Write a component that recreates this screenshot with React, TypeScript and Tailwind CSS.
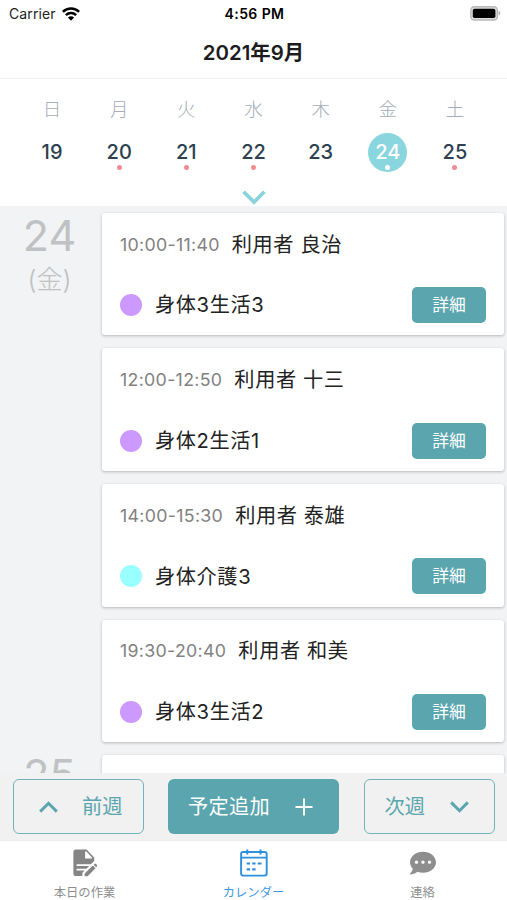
import { FaCommentDots } from "react-icons/fa";

const WEEK = [
  { label: "日", day: 19, marked: false },
  { label: "月", day: 20, marked: true },
  { label: "火", day: 21, marked: true },
  { label: "水", day: 22, marked: true },
  { label: "木", day: 23, marked: false },
  { label: "金", day: 24, marked: true },
  { label: "土", day: 25, marked: true },
];

const SELECTED_DAY = 24;

const VISITS = [
  { time: "10:00-11:40", name: "利用者 良治", service: "身体3生活3", dot: "bg-[#cc99ff]" },
  { time: "12:00-12:50", name: "利用者 十三", service: "身体2生活1", dot: "bg-[#cc99ff]" },
  { time: "14:00-15:30", name: "利用者 泰雄", service: "身体介護3", dot: "bg-[#99ffff]" },
  { time: "19:30-20:40", name: "利用者 和美", service: "身体3生活2", dot: "bg-[#cc99ff]" },
];

function WifiIcon() {
  return (
    <svg width="18" height="14" viewBox="0 0 18 14" fill="none" stroke="#000" strokeWidth="2.5">
      <path d="M0.9 4.9a11.6 11.6 0 0 1 16.2 0" />
      <path d="M3.9 8.1a7.3 7.3 0 0 1 10.2 0" />
      <path d="M9 13.8 5.9 10.6a4.5 4.5 0 0 1 6.2 0z" fill="#000" stroke="none" />
    </svg>
  );
}

function BatteryIcon() {
  return (
    <svg width="31" height="15" viewBox="0 0 31 15">
      <rect x="0.8" y="0.8" width="26.6" height="13.2" rx="3.6" fill="#ddd" stroke="#b8b8b8" strokeWidth="1.4" />
      <rect x="2.8" y="2.7" width="22.6" height="9.4" rx="1.8" fill="#000" />
      <path d="M28.7 5v4.6c1-.3 1.6-1.2 1.6-2.3s-.6-2-1.6-2.3z" fill="#b0b0b0" />
    </svg>
  );
}

function DocumentEditIcon() {
  return (
    <svg width="24" height="28" viewBox="0 0 24 28" fill="#858585">
      <path d="M3 .5h10.6l7.6 8v3.6l-3.4 3.2H3.6v1.8h12.5l-2.6 2.7H3.6v1.8h8l-2.2 2.3v3.2H3A2.6 2.6 0 0 1 .4 24.5V3.1A2.6 2.6 0 0 1 3 .5z" />
      <path d="M12.1 2.6v7h6.9v-1l-5.6-6z" fill="#fff" />
      <path d="m19.8 16.6 2.7 2.7-7.9 7.9h-3v-2.6z" />
      <path d="m20.7 15.7.9-.8a1 1 0 0 1 1.4 0l1 1a1 1 0 0 1 0 1.4l-.9.9z" />
    </svg>
  );
}

function CalendarIcon() {
  return (
    <svg width="28" height="28" viewBox="0 0 28 28" fill="none" stroke="#2e8fdb" strokeWidth="1.9">
      <rect x="1.1" y="3" width="25.6" height="23.6" rx="2" />
      <path d="M1.1 8.6h25.6M7.3.6v4.8M20.5.6v4.8" />
      <path d="M6.7 14.5h3.4M12.2 14.5h3.4M17.7 14.5h3.8M6.7 20.4h3.4M12.2 20.4h3.4" strokeWidth="2.2" />
    </svg>
  );
}

function Chevron({ up = false, className }: { up?: boolean; className?: string }) {
  return (
    <svg width="19" height="12" viewBox="0 0 19 12" fill="none" stroke="currentColor" strokeWidth="3" className={className}>
      <path d={up ? "M1.2 10.6 9.5 2.3l8.3 8.3" : "M1.2 1.4 9.5 9.7l8.3-8.3"} />
    </svg>
  );
}

function StatusBar() {
  return (
    <div className="grid h-7 grid-cols-3 items-center pr-1.5 pl-[9px] text-sm leading-7 text-black">
      <div className="flex items-center gap-[6px]">
        <span className="tracking-[0.1px] text-[#222]">Carrier</span>
        <WifiIcon />
      </div>
      <span className="pr-px text-center font-semibold tracking-[0.4px]">4:56 PM</span>
      <div className="flex justify-end pb-[2px]">
        <BatteryIcon />
      </div>
    </div>
  );
}

function WeekStrip() {
  return (
    <div className="h-[127px] bg-white px-[18.5px] pt-[18px]">
      <div className="grid grid-cols-7">
        {WEEK.map(({ label, day, marked }) => {
          const selected = day === SELECTED_DAY;
          return (
            <div key={day} className="flex flex-col items-center">
              <span className="h-6 text-[18.5px] leading-6 font-light text-[#a4adb8]">{label}</span>
              <div
                className={`mt-[12px] flex size-[39px] flex-col items-center rounded-full pt-[7px] ${
                  selected ? "bg-[#8ad6df] text-white" : "text-[#2d4150]"
                }`}
              >
                <span className="h-6 text-[20px] leading-6 font-medium">{day}</span>
                {marked && (
                  <span className={`mt-[1px] size-[5px] rounded-full ${selected ? "bg-white" : "bg-[#f08b93]"}`} />
                )}
              </div>
            </div>
          );
        })}
      </div>
      <div className="mt-[17.5px] flex justify-center">
        <Chevron className="h-[15px] w-[24px] text-[#8ad3dc]" />
      </div>
    </div>
  );
}

function VisitCard({ time, name, service, dot }: (typeof VISITS)[number]) {
  return (
    <div className="h-[122.6px] shrink-0 rounded-[3px] bg-white px-[18px] pt-[17.9px] shadow-[0_1px_3px_rgba(0,0,0,0.25)]">
      <div className="flex h-7 items-center">
        <span className="text-[17.8px] leading-7 tracking-[0.3px] text-[#828282]">{time}</span>
        <span className="ml-[12px] text-[20.2px] leading-7 tracking-[0.6px] text-[#222]">{name}</span>
      </div>
      <div className="mt-[28.3px] flex h-9 items-center">
        <span className={`size-[22px] rounded-full ${dot}`} />
        <span className="ml-[13px] pt-px text-[20.2px] leading-9 tracking-[0.6px] text-[#222]">{service}</span>
        <button className="ml-auto h-9 w-[74px] rounded-[5px] bg-[#5aa5ae] text-[16.8px] leading-9 text-white">
          詳細
        </button>
      </div>
    </div>
  );
}

function TabItem({ label, icon, active = false }: { label: string; icon: React.ReactNode; active?: boolean }) {
  return (
    <div className="flex flex-col items-center pt-[8px]">
      <div className="flex h-7 items-center justify-center">{icon}</div>
      <span className={`mt-[6px] text-[12.3px] leading-5 ${active ? "text-[#3e97de]" : "text-[#8e8e8f]"}`}>{label}</span>
    </div>
  );
}

export default function App() {
  return (
    <div
      lang="ja"
      className="flex h-[900px] w-[507px] flex-col overflow-hidden bg-white font-['Inter','Noto_Sans_CJK_JP',sans-serif]"
    >
      <StatusBar />
      <header className="flex h-[51px] items-center justify-center border-b border-[#f3f3f3] text-[20.4px] font-semibold text-[#1c1c1e]">
        2021年9月
      </header>
      <WeekStrip />

      {/* Agenda */}
      <main className="flex h-[567px] shrink-0 overflow-hidden bg-[#f1f3f4]">
        <div className="flex w-[102px] shrink-0 flex-col items-center pr-[3px] text-[#bfc1c2]">
          <div className="mt-[4px] h-[50px] text-[43px] leading-[50px]">24</div>
          <div className="mt-[2px] h-9 text-[26px] leading-9 font-light">(金)</div>
          <div className="mt-[451px] h-[50px] text-[43px] leading-[50px]">25</div>
        </div>
        <div className="flex flex-1 flex-col gap-[13px] pt-[6.8px] pr-[3px]">
          {VISITS.map((visit) => (
            <VisitCard key={visit.time} {...visit} />
          ))}
          <div className="h-[122px] shrink-0 rounded-[3px] bg-white shadow-[0_1px_3px_rgba(0,0,0,0.25)]" />
        </div>
      </main>

      {/* Week navigation */}
      <div className="flex h-[67px] shrink-0 items-start justify-between bg-[#f1f1f1] pt-[6px] pr-[12.5px] pl-[12.5px] text-[20.2px] text-[#5aa5ae]">
        <button className="flex h-[55px] w-[131px] items-center justify-between rounded-md border border-[#6fb4ba] pr-[20px] pl-[25px]">
          <Chevron up />
          <span className="pt-px">前週</span>
        </button>
        <button className="flex h-[55px] w-[171px] items-center justify-between rounded-md bg-[#5aa5ae] pr-[26px] pl-[20px] text-white">
          <span className="pt-px tracking-[0.3px]">予定追加</span>
          <svg width="18" height="18" viewBox="0 0 18 18" stroke="currentColor" strokeWidth="2">
            <path d="M9 .5v17M.5 9h17" />
          </svg>
        </button>
        <button className="flex h-[55px] w-[131px] items-center justify-between rounded-md border border-[#6fb4ba] pr-[25px] pl-[20px]">
          <span className="pt-px">次週</span>
          <Chevron />
        </button>
      </div>

      <nav className="grid h-[60px] shrink-0 grid-cols-3 border-t border-[#ececec] bg-white">
        <TabItem label="本日の作業" icon={<DocumentEditIcon />} />
        <TabItem label="カレンダー" icon={<CalendarIcon />} active />
        <TabItem label="連絡" icon={<FaCommentDots className="size-[26px] text-[#8e8e8f]" />} />
      </nav>
    </div>
  );
}
